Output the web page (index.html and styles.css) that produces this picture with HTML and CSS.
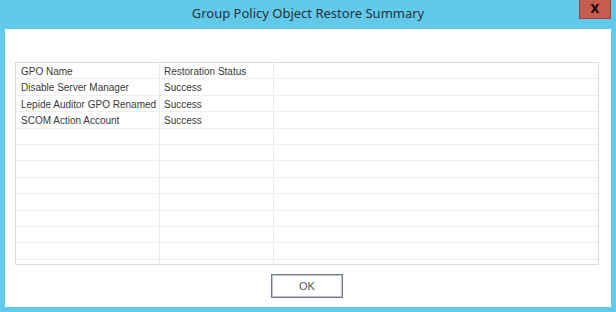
FILE: index.html
```html
<!DOCTYPE html>
<html lang="en">
<head>
    <meta charset="UTF-8">
    <title>Group Policy Object Restore Summary</title>
    <link rel="stylesheet" href="styles.css">
</head>
<body>
    <div class="window">
        <div class="titlebar">
            <span class="title">Group Policy Object Restore Summary</span>
            <button class="close">X</button>
        </div>
        <div class="client">
            <div class="grid">
                <div class="row head">
                    <div class="cell c1">GPO Name</div>
                    <div class="cell c2">Restoration Status</div>
                    <div class="cell c3"></div>
                </div>
                <div class="row">
                    <div class="cell c1">Disable Server Manager</div>
                    <div class="cell c2">Success</div>
                    <div class="cell c3"></div>
                </div>
                <div class="row">
                    <div class="cell c1">Lepide Auditor GPO Renamed</div>
                    <div class="cell c2">Success</div>
                    <div class="cell c3"></div>
                </div>
                <div class="row">
                    <div class="cell c1">SCOM Action Account</div>
                    <div class="cell c2">Success</div>
                    <div class="cell c3"></div>
                </div>
                <div class="row"><div class="cell c1"></div><div class="cell c2"></div><div class="cell c3"></div></div>
                <div class="row"><div class="cell c1"></div><div class="cell c2"></div><div class="cell c3"></div></div>
                <div class="row"><div class="cell c1"></div><div class="cell c2"></div><div class="cell c3"></div></div>
                <div class="row"><div class="cell c1"></div><div class="cell c2"></div><div class="cell c3"></div></div>
                <div class="row"><div class="cell c1"></div><div class="cell c2"></div><div class="cell c3"></div></div>
                <div class="row"><div class="cell c1"></div><div class="cell c2"></div><div class="cell c3"></div></div>
                <div class="row"><div class="cell c1"></div><div class="cell c2"></div><div class="cell c3"></div></div>
                <div class="row"><div class="cell c1"></div><div class="cell c2"></div><div class="cell c3"></div></div>
                <div class="row"><div class="cell c1"></div><div class="cell c2"></div><div class="cell c3"></div></div>
            </div>
            <div class="actions">
                <button class="ok">OK</button>
            </div>
        </div>
    </div>
</body>
</html>
```

FILE: styles.css
```css
body {
    margin: 0;
    width: 616px;
    height: 312px;
    overflow: hidden;
    background-color: #62c9e9;
    font-family: "Liberation Sans", Arial, sans-serif;
}
.window {
    display: flex;
    flex-direction: column;
    height: 312px;
    padding: 0 5px 5px 5px;
    box-sizing: border-box;
}
.titlebar {
    position: relative;
    height: 29px;
    display: flex;
    justify-content: center;
    align-items: center;
}
.title {
    font-family: "Noto Sans", sans-serif;
    font-size: 13px;
    color: #26323a;
    padding-bottom: 3px;
}
.close {
    position: absolute;
    top: 0;
    right: 0;
    width: 32px;
    height: 19px;
    padding: 0;
    border: 1px solid #94423b;
    border-top: none;
    background-color: #c85a50;
    color: #1a0d0c;
    font-family: "DejaVu Sans", sans-serif;
    font-weight: bold;
    font-size: 12px;
    line-height: 17px;
}
.client {
    flex: 1;
    background-color: #fff;
    padding: 33px 12px 0 10px;
    display: flex;
    flex-direction: column;
}
.grid {
    height: 203px;
    border: 1px solid #e0d8e0;
    overflow: hidden;
    box-sizing: border-box;
}
.row {
    display: flex;
    height: 16.4px;
    border-bottom: 1px solid #eeeeee;
    box-sizing: border-box;
}
.cell {
    font-size: 10px;
    line-height: 15px;
    padding-top: 1px;
    color: #3a3a3a;
    padding-left: 5px;
    box-sizing: border-box;
    white-space: nowrap;
    overflow: hidden;
}
.c1 {
    width: 144px;
    border-right: 1px solid #ececec;
}
.c2 {
    width: 114px;
    border-right: 1px solid #ececec;
    padding-left: 4px;
}
.c3 {
    flex: 1;
}
.actions {
    display: flex;
    justify-content: center;
    padding-top: 9px;
}
.ok {
    width: 72px;
    height: 24px;
    border: 1px solid #6f7888;
    box-shadow: inset 0 0 0 1px #c3c8d0;
    background-color: #fff;
    font-family: "Liberation Sans", Arial, sans-serif;
    font-size: 11px;
    color: #555;
}
```
